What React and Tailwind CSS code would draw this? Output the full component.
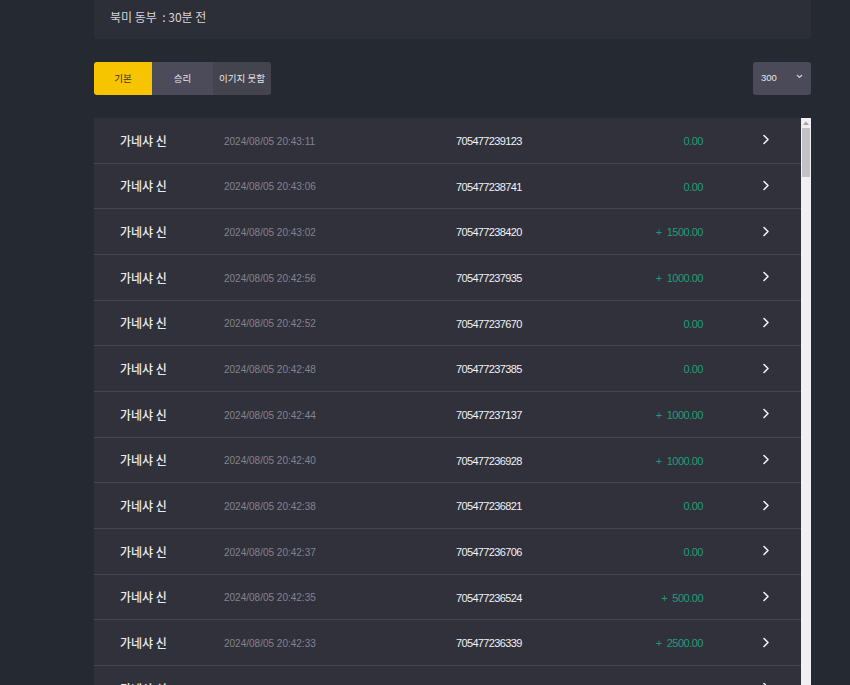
import React from "react";

const rows = [
  ["2024/08/05 20:43:11", "705477239123", "0.00"],
  ["2024/08/05 20:43:06", "705477238741", "0.00"],
  ["2024/08/05 20:43:02", "705477238420", "+  1500.00"],
  ["2024/08/05 20:42:56", "705477237935", "+  1000.00"],
  ["2024/08/05 20:42:52", "705477237670", "0.00"],
  ["2024/08/05 20:42:48", "705477237385", "0.00"],
  ["2024/08/05 20:42:44", "705477237137", "+  1000.00"],
  ["2024/08/05 20:42:40", "705477236928", "+  1000.00"],
  ["2024/08/05 20:42:38", "705477236821", "0.00"],
  ["2024/08/05 20:42:37", "705477236706", "0.00"],
  ["2024/08/05 20:42:35", "705477236524", "+  500.00"],
  ["2024/08/05 20:42:33", "705477236339", "+  2500.00"],
  ["2024/08/05 20:42:30", "705477236101", "0.00"],
];

const font = { fontFamily: '"Noto Sans CJK KR", "Noto Sans", sans-serif' };

function Chevron() {
  return (
    <svg width="8" height="11" viewBox="0 0 8 11" fill="none">
      <path d="M2 1.5 L6 5.5 L2 9.5" stroke="#f2f2f5" strokeWidth="1.6" strokeLinecap="round" strokeLinejoin="round" />
    </svg>
  );
}

function Row({ date, id, amount }) {
  return (
    <div className="flex items-center h-[45.67px] shrink-0 border-b border-[#474752] bg-[#31313c]">
      <div className="w-[130px] pl-[26px] text-[12px] font-medium text-[#ececf0] font-['Noto_Sans_CJK_KR'] mt-[1px]">가네샤 신</div>
      <div className="w-[232px] text-[10px] text-[#83838e] tracking-[0px] font-['Liberation_Sans'] mt-[2px]">{date}</div>
      <div className="w-[160px] text-[11px] text-[#f2f2f5] tracking-[-0.65px] font-['Liberation_Sans'] mt-[2px]">{id}</div>
      <div className="w-[87px] text-right text-[11px] text-[#1f9e76] tracking-[-0.5px] font-['Liberation_Sans'] mt-[2px] whitespace-pre">{amount}</div>
      <div className="ml-[59px] -mt-[1px] flex items-center"><Chevron /></div>
    </div>
  );
}

export default function App() {
  return (
    <div className="w-[850px] h-[685px] overflow-hidden bg-[#252932]" style={font}>
      <div className="ml-[94px] w-[717px]">
        <div className="h-[39px] bg-[#2c2f38] rounded-b-[3px] flex items-center pl-[16px] text-[12px] text-[#d6d6dc]">
          <span className="-mt-[5px] whitespace-pre">북미 동부  : 30분 전</span>
        </div>
        <div className="flex justify-between mt-[23px] h-[33px]">
          <div className="flex rounded-[3px] overflow-hidden text-[9.5px]">
            <div className="w-[58px] bg-[#f6c500] text-[#3a3420] flex items-center justify-center">기본</div>
            <div className="w-[61px] bg-[#4b4b5a] text-[#e6e6ec] flex items-center justify-center">승리</div>
            <div className="w-[58px] bg-[#44444f] text-[#e6e6ec] flex items-center justify-center">이기지 못함</div>
          </div>
          <div className="w-[58px] bg-[#4a4a58] rounded-[3px] flex items-center justify-between pl-[8px] pr-[8px] text-[9.5px] text-[#e6e6ec]">
            <span className="font-['Liberation_Sans']">300</span>
            <svg width="7" height="5" viewBox="0 0 7 5" fill="none" className="-mt-[4px]">
              <path d="M1 1 L3.5 3.5 L6 1" stroke="#d0d0d8" strokeWidth="1.2" />
            </svg>
          </div>
        </div>
        <div className="flex mt-[23px]">
          <div className="w-[707px] flex flex-col">
            {rows.map((r, i) => (
              <Row key={i} date={r[0]} id={r[1]} amount={r[2]} />
            ))}
          </div>
          <div className="w-[10px] h-[600px] bg-[#f0f0f3] flex flex-col items-center">
            <div className="h-[10px] w-full flex items-center justify-center">
              <svg width="6" height="4" viewBox="0 0 6 4"><path d="M0 4 L3 0.5 L6 4 Z" fill="#a3a3a8" /></svg>
            </div>
            <div className="w-[8px] h-[49px] bg-[#c2c2c6]" />
          </div>
        </div>
      </div>
    </div>
  );
}
